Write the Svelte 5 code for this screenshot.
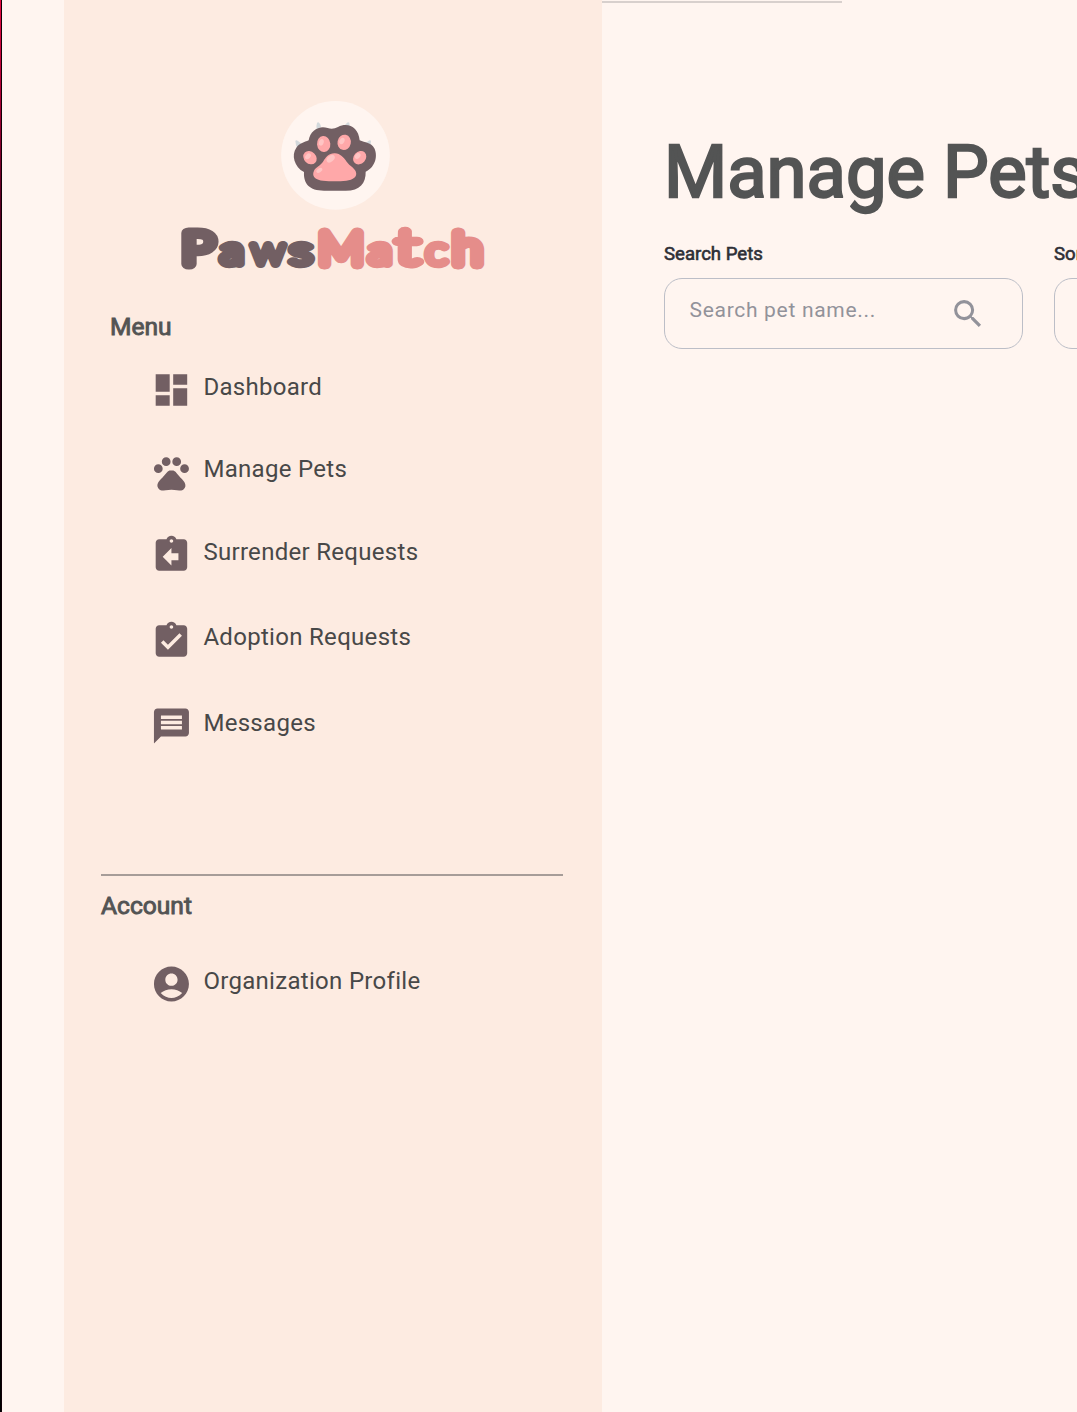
<script>
  const clip =
    'M19 3h-4.18C14.4 1.84 13.3 1 12 1c-1.3 0-2.4.84-2.82 2H5c-1.1 0-2 .9-2 2v14c0 1.1.9 2 2 2h14c1.1 0 2-.9 2-2V5c0-1.1-.9-2-2-2zm-7 0c.55 0 1 .45 1 1s-.45 1-1 1-1-.45-1-1 .45-1 1-1z';
  const dot = (x, y) => `M${x - 2.5} ${y}a2.5 2.5 0 1 0 5 0a2.5 2.5 0 1 0-5 0z`;

  const menu = [
    { label: 'Dashboard', icon: 'M3 13h8V3H3v10zm0 8h8v-6H3v6zm10 0h8V11h-8v10zm0-18v6h8V3h-8z' },
    {
      label: 'Manage Pets',
      icon:
        dot(4.5, 9.5) + dot(9, 5.5) + dot(15, 5.5) + dot(19.5, 9.5) +
        'M17.34 14.86c-.87-1.02-1.6-1.89-2.48-2.91-.46-.54-1.05-1.08-1.75-1.32-.11-.04-.22-.07-.33-.09-.25-.04-.52-.04-.78-.04s-.53 0-.79.05c-.11.02-.22.05-.33.09-.7.24-1.28.78-1.75 1.32-.87 1.02-1.6 1.89-2.48 2.91-1.31 1.31-2.92 2.76-2.62 4.79.29 1.02 1.02 2.03 2.33 2.32.73.15 3.06-.44 5.54-.44h.18c2.48 0 4.81.58 5.54.44 1.31-.29 2.04-1.31 2.33-2.32.31-2.04-1.3-3.49-2.61-4.8z'
    },
    { label: 'Surrender Requests', icon: clip + 'm4 12h-4v3l-5-5 5-5v3h4v4z' },
    { label: 'Adoption Requests', icon: clip + 'm-2 14l-4-4 1.41-1.41L10 14.17l6.59-6.59L18 9l-8 8z' },
    {
      label: 'Messages',
      icon: 'M20 2H4c-1.1 0-1.99.9-1.99 2L2 22l4-4h14c1.1 0 2-.9 2-2V4c0-1.1-.9-2-2-2zm-2 12H6v-2h12v2zm0-3H6V9h12v2zm0-3H6V6h12v2z'
    }
  ];
  const account = [
    {
      label: 'Organization Profile',
      icon: 'M12 2C6.48 2 2 6.48 2 12s4.48 10 10 10 10-4.48 10-10S17.52 2 12 2zm0 4c1.93 0 3.5 1.57 3.5 3.5S13.93 13 12 13s-3.5-1.57-3.5-3.5S10.07 6 12 6zm0 14c-2.03 0-4.43-.82-6.14-2.88C7.55 15.8 9.68 15 12 15s4.45.8 6.14 2.12C16.43 19.18 14.03 20 12 20z'
    }
  ];
</script>

{#snippet items(list)}
  <ul>
    {#each list as item}
      <li>
        <svg viewBox="-0.25 0 24 24"><path fill-rule="evenodd" d={item.icon} /></svg>
        <span>{item.label}</span>
      </li>
    {/each}
  </ul>
{/snippet}

<div class="page">
  <div class="edge"></div>
  <aside>
    <svg class="badge" viewBox="34 30 327 330">
      <circle cx="197.5" cy="196" r="163" fill="#fff5f0" />
      <g fill="#d3d9dc">
        <path d="M77 153q2-4 8 0q9 5 10 10l-12 12q-5-9-6-22zM142 99q3-5 7 0q5 6 5 11l-13 8q-2-10 1-19zM239 98q-4-3-8 2l-5 5l14 6zM304 153q-2-5-8 0l-8 6l13 9q3-6 3-15z" />
      </g>
      <path fill="#725f63" d="M103 246C74 231 64 195 80 173C90 159 104 157 117 151C122 120 150 105 174 114Q190 119 205 111C235 95 267 112 270 151C286 159 304 156 314 175C327 203 312 236 288 245C289 279 271 302 228 302H163C119 302 101 281 103 246Z" />
      <g fill="#ffa8a9">
        <ellipse cx="162" cy="162" rx="20" ry="24" transform="rotate(-5 162 162)" />
        <ellipse cx="223.5" cy="157" rx="20" ry="23" transform="rotate(12 223 157)" />
        <ellipse cx="121" cy="203" rx="18" ry="22" transform="rotate(-45 121 203)" />
        <ellipse cx="270" cy="203" rx="18" ry="22" transform="rotate(42 270 203)" />
        <path d="M196 190C178 189 168 202 161 214C153 227 139 231 133 242C124 261 141 270 160 272Q195 276 230 272C250 270 265 261 258 244C253 232 241 229 231 215C222 202 212 191 196 190Z" />
      </g>
      <g fill="#ffc5c4">
        <ellipse cx="155" cy="157" rx="7" ry="10" transform="rotate(20 155 157)" />
        <ellipse cx="217" cy="153" rx="7" ry="10" transform="rotate(30 217 153)" />
        <ellipse cx="115" cy="199" rx="7" ry="10" transform="rotate(45 115 199)" />
        <ellipse cx="264" cy="198" rx="7" ry="10" transform="rotate(45 264 198)" />
        <ellipse cx="183" cy="206" rx="9" ry="14" transform="rotate(50 183 206)" />
        <ellipse cx="149" cy="241" rx="6" ry="10" transform="rotate(55 149 241)" />
      </g>
    </svg>
    <svg class="wordmark" viewBox="0 0 310 52">
      <text class="paws" y="41.5"><tspan class="cap" x="4" textLength="32" lengthAdjust="spacingAndGlyphs">P</tspan><tspan x="42.5" textLength="23" lengthAdjust="spacingAndGlyphs">a</tspan><tspan class="wide" x="73.5" textLength="33" lengthAdjust="spacingAndGlyphs">w</tspan><tspan x="112" textLength="22" lengthAdjust="spacingAndGlyphs">s</tspan></text>
      <text class="match" y="41.5"><tspan class="cap" x="140.5" textLength="45" lengthAdjust="spacingAndGlyphs">M</tspan><tspan x="190.5" textLength="23" lengthAdjust="spacingAndGlyphs">a</tspan><tspan class="tall" x="218" textLength="23" lengthAdjust="spacingAndGlyphs">t</tspan><tspan x="248" textLength="21" lengthAdjust="spacingAndGlyphs">c</tspan><tspan class="cap" x="275" textLength="29" lengthAdjust="spacingAndGlyphs">h</tspan></text>
    </svg>
    <h2 class="menu-title">Menu</h2>
    {@render items(menu)}
    <hr />
    <h2 class="account-title">Account</h2>
    {@render items(account)}
  </aside>
  <main>
    <div class="topline"></div>
    <h1>Manage Pets</h1>
    <div class="filters">
      <div class="field">
        <span class="label">Search Pets</span>
        <div class="box">
          <span class="hint">Search pet name...</span>
          <svg viewBox="-0.3 -0.3 24 24"><path d="M15.5 14h-.79l-.28-.27A6.471 6.471 0 0 0 16 9.5 6.5 6.5 0 1 0 9.5 16c1.61 0 3.09-.59 4.23-1.57l.27.28v.79l5 4.99L20.49 19l-4.99-5zm-6 0C7.01 14 5 11.99 5 9.5S7.01 5 9.5 5 14 7.01 14 9.5 11.99 14 9.5 14z" /></svg>
        </div>
      </div>
      <div class="field">
        <span class="label">Sort By</span>
        <div class="box"></div>
      </div>
    </div>
  </main>
</div>

<style>
  :global(body) { overflow: hidden; }
  .page {
    display: flex;
    width: 1077px;
    height: 1412px;
    overflow: hidden;
    background: #fff5f0;
    font-family: Roboto, 'Liberation Sans', sans-serif;
  }
  .edge {
    flex: none;
    box-sizing: border-box;
    width: 2px;
    margin-right: 62px;
    border-right: 1px solid #100008;
    background: linear-gradient(#e80a42 0, #b00035 90px, #5c0023 200px, #2b0011 370px, #000 600px);
  }
  aside {
    flex: none;
    display: flex;
    flex-direction: column;
    box-sizing: border-box;
    width: 538px;
    padding: 100px 37px 0;
    background: #fdebe1;
  }
  .badge { width: 109px; height: 110px; margin-left: 180px; overflow: visible; }
  .wordmark { width: 310px; height: 52px; margin: 12px 0 0 77px; overflow: visible; }
  .wordmark text {
    font-family: Lato, sans-serif;
    font-weight: 100;
    font-size: 37px;
    stroke-width: 8.5px;
    stroke-linejoin: round;
    stroke-linecap: round;
  }
  .wordmark .cap { font-size: 43px; stroke-width: 11px; }
  .wordmark .wide { stroke-width: 8px; }
  .wordmark .tall { font-size: 47px; stroke-width: 9px; }
  .paws { fill: #725f63; stroke: #725f63; }
  .match { fill: #e58d8a; stroke: #e58d8a; }
  h1, h2 { margin: 0; font-weight: 400; color: #535454; }
  h2 { font-size: 24.6px; line-height: 30px; -webkit-text-stroke: 0.9px #535454; }
  .menu-title { margin: 38px 0 27px 9px; }
  ul { list-style: none; margin: 0; padding: 0 0 0 49px; }
  li { display: flex; gap: 11.4px; height: 42px; margin-bottom: 41px; }
  li:nth-child(2) { margin-bottom: 40px; }
  li:nth-child(3) { margin-bottom: 44px; }
  li:nth-child(4) { margin-bottom: 43px; }
  li:last-child { margin-bottom: 0; }
  li svg { width: 42px; height: 42px; fill: #725f63; }
  li span { font-size: 24px; line-height: 37px; letter-spacing: 0.3px; color: #484848; white-space: nowrap; }
  li:nth-child(even) span { line-height: 35px; }
  hr { width: 462px; height: 1.5px; margin: 127px 0 15px; border: 0; background: #a69c98; }
  .account-title { margin-bottom: 42px; }
  main { flex: 1; min-width: 0; overflow: hidden; }
  .topline { width: 240px; height: 2px; margin-top: 1px; background: #d8d0cd; }
  h1 {
    margin: 126px 0 0 62px;
    font-size: 72.4px;
    line-height: 88px;
    white-space: nowrap;
    -webkit-text-stroke: 2.4px #535454;
  }
  .filters { display: flex; gap: 31px; padding: 25px 0 0 61.5px; }
  .field { flex: none; width: 359px; }
  .label {
    display: block;
    padding-left: 0.5px;
    font-size: 18.6px;
    line-height: 24px;
    color: #2e2f36;
    -webkit-text-stroke: 0.6px #2e2f36;
    white-space: nowrap;
  }
  .box {
    display: flex;
    box-sizing: border-box;
    height: 71.5px;
    margin-top: 11.5px;
    padding: 15px 36px 0 25px;
    border: 1.5px solid #bcbec7;
    border-radius: 18px;
    justify-content: space-between;
  }
  .hint { font-size: 21px; line-height: 32px; letter-spacing: 0.7px; color: #92929a; }
  .box svg { width: 37px; height: 37px; margin-top: 1px; fill: #92929a; }
</style>
